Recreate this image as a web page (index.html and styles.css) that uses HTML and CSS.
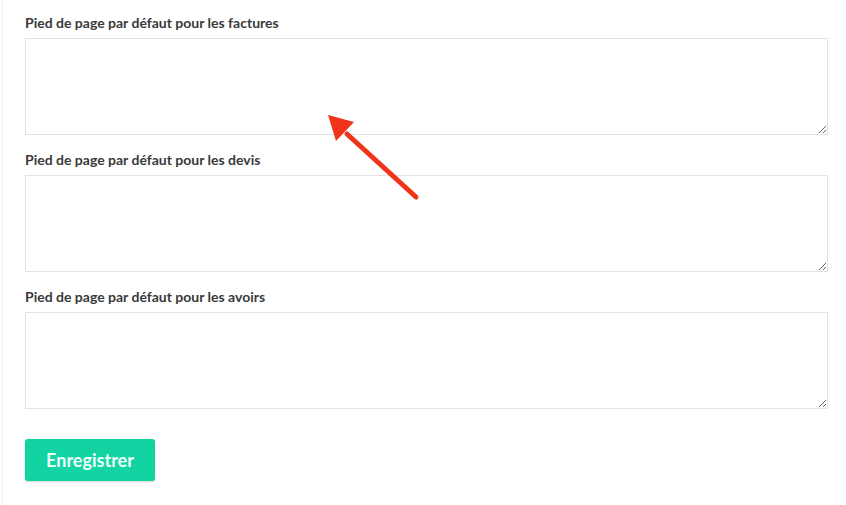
FILE: index.html
```html
<!DOCTYPE html>
<html lang="fr">
<head>
<meta charset="utf-8">
<link rel="stylesheet" href="styles.css">
</head>
<body>
<div class="page">
  <form class="form">
    <div class="field">
      <label class="label">Pied de page par défaut pour les factures</label>
      <textarea class="area"></textarea>
    </div>
    <div class="field">
      <label class="label">Pied de page par défaut pour les devis</label>
      <textarea class="area"></textarea>
    </div>
    <div class="field">
      <label class="label">Pied de page par défaut pour les avoirs</label>
      <textarea class="area"></textarea>
    </div>
    <div class="actions">
      <button type="button" class="btn">Enregistrer</button>
    </div>
  </form>
  <svg class="arrow" width="120" height="110" viewBox="0 0 120 110">
    <line x1="95" y1="89" x2="26" y2="26" stroke="#ef3419" stroke-width="5" stroke-linecap="round"/>
    <polygon points="7,7 33,14 15,33" fill="#ef3419"/>
  </svg>
</div>
</body>
</html>
```

FILE: styles.css
```css
html, body {
  margin: 0;
  padding: 0;
  background: #ffffff;
}
.page {
  position: relative;
  width: 846px;
  height: 505px;
  box-sizing: border-box;
  border-left: 1px solid #f0f0f0;
  margin-left: 2px;
  font-family: Lato, "Noto Sans", sans-serif;
}
.form {
  display: flex;
  flex-direction: column;
  padding: 14px 0 0 22px;
  width: 804px;
}
.field {
  display: flex;
  flex-direction: column;
  margin-bottom: 16px;
}
.label {
  font-size: 14px;
  font-weight: 700;
  color: #3a3a3a;
  line-height: 17px;
  margin-bottom: 7px;
}
.area {
  display: block;
  box-sizing: border-box;
  width: 803px;
  height: 97px;
  border: 1px solid #e3e3e3;
  border-radius: 0;
  margin: 0;
  padding: 6px;
  resize: vertical;
  background: #fff;
}
.actions {
  margin-top: 14px;
}
.btn {
  width: 130px;
  height: 42px;
  border: none;
  border-radius: 3px;
  background: #12d3a2;
  color: #ecfffa;
  font-family: Lato, "Noto Sans", sans-serif;
  font-weight: 700;
  font-size: 18px;
  box-shadow: 0 1px 2px rgba(0,0,0,0.18);
  padding: 0;
}
.arrow {
  position: absolute;
  left: 318px;
  top: 108px;
}
```
